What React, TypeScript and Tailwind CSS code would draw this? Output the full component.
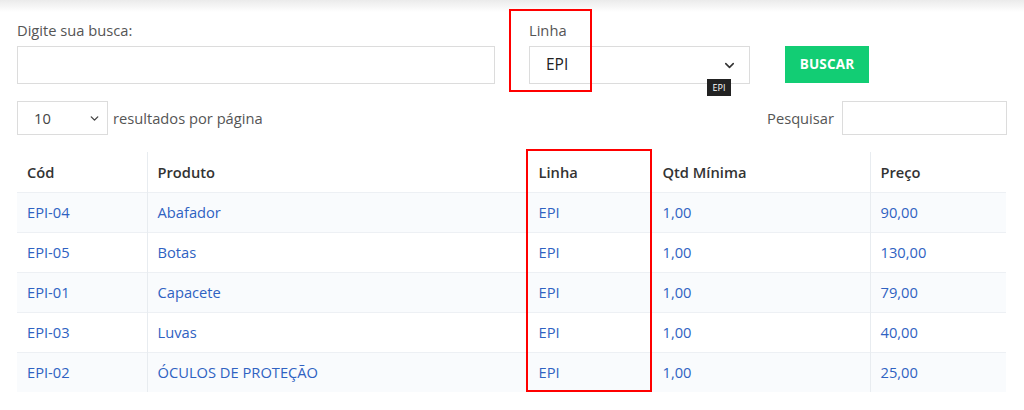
import { ChevronDown } from 'lucide-react'

const rows = [
    { cod: 'EPI-04', produto: 'Abafador', linha: 'EPI', qtd: '1,00', preco: '90,00' },
    { cod: 'EPI-05', produto: 'Botas', linha: 'EPI', qtd: '1,00', preco: '130,00' },
    { cod: 'EPI-01', produto: 'Capacete', linha: 'EPI', qtd: '1,00', preco: '79,00' },
    { cod: 'EPI-03', produto: 'Luvas', linha: 'EPI', qtd: '1,00', preco: '40,00' },
    { cod: 'EPI-02', produto: 'ÓCULOS DE PROTEÇÃO', linha: 'EPI', qtd: '1,00', preco: '25,00' },
]

export default function App() {
    return (
        <div className="relative w-[1024px] h-[410px] bg-white overflow-hidden text-[14.7px] text-[#555]" style={{ fontFamily: '"Open Sans", "Noto Sans", sans-serif' }}>
            <div className="h-[12px] bg-gradient-to-b from-[#ebebeb] to-white" />

            <div className="px-[17px] pt-[8px]">
                {/* search row */}
                <div className="flex items-end">
                    <div className="w-[478px]">
                        <div className="leading-[20px] mb-[6px]">Digite sua busca:</div>
                        <input className="w-full h-[38px] border border-[#dcdcdc] outline-none px-3" />
                    </div>
                    <div className="w-[221px] ml-[34px]">
                        <div className="leading-[20px] mb-[6px]">Linha</div>
                        <div className="h-[38px] border border-[#dcdcdc] flex items-center justify-between pl-[16px] pr-[12px] text-[#222] text-[15.5px]">
                            <span>EPI</span>
                            <ChevronDown size={15} strokeWidth={2.5} className="text-[#333]" />
                        </div>
                    </div>
                    <button className="ml-[35px] w-[84px] h-[37px] mb-[1px] bg-[#12cd74] text-white font-bold text-[13.5px] tracking-[0.2px]">
                        BUSCAR
                    </button>
                </div>

                {/* length / filter row */}
                <div className="flex items-center justify-between mt-[17px]">
                    <div className="flex items-center">
                        <div className="w-[91px] h-[34px] border border-[#dcdcdc] flex items-center justify-between pl-[16px] pr-[6px] text-[#444]">
                            <span>10</span>
                            <ChevronDown size={13} strokeWidth={2.5} className="text-[#444]" />
                        </div>
                        <span className="ml-[5px]">resultados por página</span>
                    </div>
                    <div className="flex items-center">
                        <span className="mr-[8px]">Pesquisar</span>
                        <input className="w-[165px] h-[34px] border border-[#dcdcdc] outline-none px-2" />
                    </div>
                </div>

                {/* table */}
                <table className="mt-[17px] w-[989px] table-fixed border-collapse">
                    <colgroup>
                        <col className="w-[130px]" />
                        <col className="w-[380px]" />
                        <col className="w-[124px]" />
                        <col className="w-[219px]" />
                        <col className="w-[136px]" />
                    </colgroup>
                    <thead>
                        <tr className="h-[40px] text-left text-[#333]">
                            <th className="pl-[10px] font-semibold">Cód</th>
                            <th className="pl-[10px] font-semibold border-l border-[#e8ecf0]">Produto</th>
                            <th className="pl-[11px] font-semibold border-l border-[#e8ecf0]">Linha</th>
                            <th className="pl-[11px] font-semibold border-l border-[#e8ecf0]">Qtd Mínima</th>
                            <th className="pl-[10px] font-semibold border-l border-[#e8ecf0]">Preço</th>
                        </tr>
                    </thead>
                    <tbody className="text-[#2f62c2]">
                        {rows.map((r, i) => (
                            <tr key={r.cod} className={`h-[40px] border-t border-[#edf0f4] ${i % 2 === 0 ? 'bg-[#f9fbfd]' : 'bg-white'}`}>
                                <td className="pl-[10px]">{r.cod}</td>
                                <td className="pl-[10px] border-l border-[#e8ecf0]">{r.produto}</td>
                                <td className="pl-[11px] border-l border-[#e8ecf0]">{r.linha}</td>
                                <td className="pl-[11px] border-l border-[#e8ecf0]">{r.qtd}</td>
                                <td className="pl-[10px] border-l border-[#e8ecf0]">{r.preco}</td>
                            </tr>
                        ))}
                    </tbody>
                </table>
            </div>

            {/* tooltip */}
            <div className="absolute left-[707px] top-[79px] w-[24px] h-[17px] bg-[#222] text-white text-[9px] leading-[17px] text-center">EPI</div>

            {/* annotation boxes */}
            <div className="absolute left-[509px] top-[9px] w-[83px] h-[83px] border-2 border-[#f00]" />
            <div className="absolute left-[526px] top-[149px] w-[126px] h-[243px] border-2 border-[#f00]" />
        </div>
    )
}
